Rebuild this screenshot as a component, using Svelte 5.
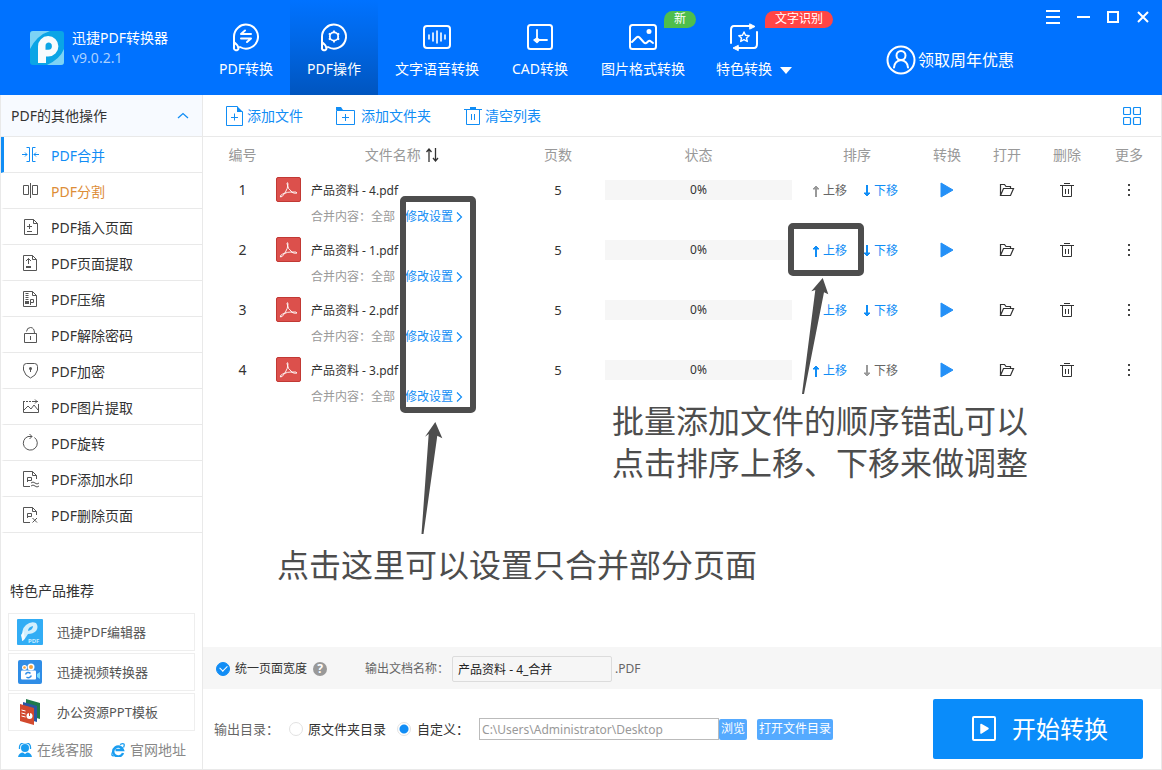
<script>
  const tabs = [
    { label: 'PDF转换', icon: 'convert' },
    { label: 'PDF操作', icon: 'operate', active: true },
    { label: '文字语音转换', icon: 'voice', wide: true },
    { label: 'CAD转换', icon: 'cad' },
    { label: '图片格式转换', icon: 'image', wide: true, badge: '新', tone: 'green' },
    { label: '特色转换', icon: 'special', menu: true, badge: '文字识别', tone: 'red' }
  ];

  const tools = [
    { label: 'PDF合并', icon: 'merge' },
    { label: 'PDF分割', icon: 'split' },
    { label: 'PDF插入页面', icon: 'insert' },
    { label: 'PDF页面提取', icon: 'extract' },
    { label: 'PDF压缩', icon: 'compress' },
    { label: 'PDF解除密码', icon: 'unlock' },
    { label: 'PDF加密', icon: 'shield' },
    { label: 'PDF图片提取', icon: 'picture' },
    { label: 'PDF旋转', icon: 'rotate' },
    { label: 'PDF添加水印', icon: 'watermark' },
    { label: 'PDF删除页面', icon: 'remove' }
  ];

  const products = [
    { label: '迅捷PDF编辑器', icon: 'editor' },
    { label: '迅捷视频转换器', icon: 'video' },
    { label: '办公资源PPT模板', icon: 'ppt' }
  ];

  const files = [
    { name: '产品资料 - 4.pdf', pages: 5, progress: 0 },
    { name: '产品资料 - 1.pdf', pages: 5, progress: 0 },
    { name: '产品资料 - 2.pdf', pages: 5, progress: 0 },
    { name: '产品资料 - 3.pdf', pages: 5, progress: 0 }
  ];

  let current = $state('merge');
  let unify = $state(true);
  let target = $state('custom');
  let outputName = $state('产品资料 - 4_合并');
  let outputPath = $state('C:\\Users\\Administrator\\Desktop');
</script>

<div class="app">
  <header>
    <div class="brand">
      <svg width="34" height="34" viewBox="0 0 34 34">
        <rect width="34" height="34" rx="3" fill="#0aa5e6" />
        <path d="M0 3Q0 0 3 0H20Q7 4 0 18Z" fill="#7dd3f5" />
        <path d="M34 18V31Q34 34 31 34H17Q30 28 34 18Z" fill="#7dd3f5" />
        <path fill-rule="evenodd" d="M8 32V15.500A10.200 10.200 0 1 1 18.200 25.500H16V32ZM18.300 11.600A3.600 3.600 0 0 0 15.500 15.300V18.800H18.300A3.600 3.600 0 0 0 18.300 11.600Z" fill="#f7fbfd" />
      </svg>
      <div class="brand-text">
        <strong>迅捷PDF转换器</strong>
        <span>v9.0.2.1</span>
      </div>
    </div>

    <nav class="tabs">
      {#each tabs as tab}
        <button class="tab" class:active={tab.active} class:wide={tab.wide} class:menu={tab.menu}>
          <span class="tab-icon">
            <svg width="30" height="30" viewBox="0 0 30 30" fill="none" stroke="#fff" stroke-width="2" stroke-linecap="round" stroke-linejoin="round">
              {#if tab.icon === 'convert' || tab.icon === 'operate'}
                <path d="M3 15A12 12 0 1 1 9 25M3 15V25.500A2.300 2.300 0 0 0 7.500 26.500Q7 23 3.500 20.500" />
                {#if tab.icon === 'convert'}
                  <path d="M20 12H10L14 8.500M10 16.500H20L16 20" />
                {:else}
                  <circle cx="15" cy="14.500" r="4.200" stroke-width="1.800" />
                  <path stroke-width="1.800" stroke-linecap="butt" d="M15 10.500V8.500M15 18.500V20.500M11.500 12.500L9.800 11.500M18.500 12.500L20.200 11.500M11.500 16.500L9.800 17.500M18.500 16.500L20.200 17.500" />
                {/if}
              {:else if tab.icon === 'voice'}
                <rect x="2" y="4" width="26" height="22" rx="3" />
                <path d="M7 13V17M11 11V19M15 9V21M19 11V19M23 13V17" stroke-width="1.600" />
              {:else if tab.icon === 'cad'}
                <rect x="3" y="3" width="24" height="24" rx="2.500" />
                <path d="M12 8V18H22" stroke-width="1.800" />
                <path d="M12 16L14.500 18L12 20.500L9 18Z" fill="#fff" stroke-width="1.500" />
              {:else if tab.icon === 'image'}
                <rect x="2" y="3" width="26" height="24" rx="2.500" />
                <path d="M4 20L8.500 15.500Q10 14 11.500 15.500L16 20.500Q17.500 22 19 20.500L20 19.500Q21.500 18 23 19.500L25 21" />
                <circle cx="21" cy="9.500" r="1.500" fill="#fff" />
              {:else}
                <path d="M2 21V8Q2 4 5 4H21M28 10V22Q28 26 25 26H9" />
                <path d="M21 2L26 4.500L21 7ZM9 23.500L4 26L9 28.500Z" fill="#fff" stroke-width="1" />
                <path stroke-width="1.400" d="M15 10L16.500 13.300L20.200 13.700L17.500 16L18.300 19.500L15 17.700L11.700 19.500L12.500 16L9.800 13.700L13.500 13.300Z" />
              {/if}
            </svg>
            {#if tab.badge}<span class="badge {tab.tone}">{tab.badge}</span>{/if}
          </span>
          <span class="tab-label">{tab.label}</span>
          {#if tab.menu}
            <svg class="caret" width="12" height="7" viewBox="0 0 12 7"><path d="M0 0H12L6 7Z" fill="#fff" /></svg>
          {/if}
        </button>
      {/each}
    </nav>

    <button class="promo">
      <svg width="30" height="30" viewBox="0 0 30 30" fill="none" stroke="#fff" stroke-width="2" stroke-linecap="round">
        <circle cx="15" cy="15" r="13.500" />
        <circle cx="15" cy="10.500" r="4.500" />
        <path d="M8 22.500Q8.500 16 15 15Q21.500 16 22 22.500" />
      </svg>
      领取周年优惠
    </button>

    <div class="window-controls">
      <button aria-label="菜单"><svg width="14" height="14" viewBox="0 0 14 14" stroke="#fff" stroke-width="2"><path d="M0 1H14M0 7H14M0 13H14" /></svg></button>
      <button aria-label="最小化"><svg width="14" height="14" viewBox="0 0 14 14" stroke="#fff" stroke-width="2"><path d="M1 7H14" /></svg></button>
      <button aria-label="最大化"><svg width="14" height="14" viewBox="0 0 14 14" fill="none" stroke="#fff" stroke-width="2"><path d="M2 2H12V12H2Z" /></svg></button>
      <button aria-label="关闭"><svg width="14" height="14" viewBox="0 0 14 14" stroke="#fff" stroke-width="2"><path d="M2 2L12 12M12 2L2 12" /></svg></button>
    </div>
  </header>

  <div class="body">
    <aside>
      <button class="group">
        PDF的其他操作
        <svg width="12" height="8" viewBox="0 0 12 8" fill="none" stroke="#118df5" stroke-width="1.300"><path d="M1 6L6 1.500L11 6" /></svg>
      </button>
      <ul class="tools">
        {#each tools as tool}
          <li>
            <button class="tool {tool.icon}" class:current={current === tool.icon} onclick={() => (current = tool.icon)}>
              <svg width="18" height="18" viewBox="0 0 18 18" fill="none" stroke="currentColor">
                {#if tool.icon === 'merge'}
                  <path d="M4.500 1.500H7.500V15.500H4.500M13.500 1.500H10.500V15.500H13.500M0 8.500H5M3 6.500L5 8.500L3 10.500M17 8.500H12M14 6.500L12 8.500L14 10.500" />
                {:else if tool.icon === 'split'}
                  <path d="M1.500 3.500H6.500V12.500H1.500ZM10.500 3.500H15.500V12.500H10.500ZM8.500 1V16" />
                {:else if tool.icon === 'insert'}
                  <path d="M11.500 1.500H2.500V16.500H15.500V5.500ZM11.500 1.500V5.500H15.500M7.500 6V11M5 8.500H10M5 13.500H10" />
                {:else if tool.icon === 'extract'}
                  <path d="M10.500 1.500H1.500V16.500H14.500V5.500ZM10.500 1.500V5.500H14.500M6.500 4.500V10M4 7L6.500 4.500L9 7" />
                  <path d="M4 13H9" stroke-width="2" />
                {:else if tool.icon === 'compress'}
                  <path d="M10.500 1.500H1.500V16.500H14.500V5.500ZM10.500 1.500V5.500H14.500M8.500 15V9.500H11.500V12.500H8.500" />
                  <path d="M5 3V10" stroke-width="3" stroke-dasharray="1 1" /><path d="M3 12.500H7" stroke-width="3" />
                {:else if tool.icon === 'unlock'}
                  <path d="M2.500 7.500H14.500V16.500H2.500ZM4.500 5.500Q5 1.500 8.500 1.500Q12.500 1.500 12.500 7.500M8.500 10V14" />
                {:else if tool.icon === 'shield'}
                  <path d="M1.500 4.500Q1.500 1.500 4.500 1.500H12.500Q15.500 1.500 15.500 4.500V8Q14 14 8.500 16Q3 14 1.500 8Z" />
                  <circle cx="8.500" cy="6.500" r="1.500" fill="currentColor" stroke="none" /><path d="M8.500 7V10" />
                {:else if tool.icon === 'picture'}
                  <path d="M1.500 3V14.500H16.500V6M2 12L6 8L9 11L12 7L16 12" />
                  <path d="M1 3.500H10" stroke-dasharray="2 1" /><path d="M10 3.500H16M13 1.500L15 3.500L13 5.500" />
                {:else if tool.icon === 'rotate'}
                  <path d="M12.500 3.500A7 7 0 1 1 6 2.500H10M7.500 0L10 2.500L7.500 5" />
                {:else}
                  <path d="M8 16.500H1.500V1.500H10.500L14.500 5.500V9M10.500 1.500V5.500H14.500M5.500 12V7.500H9.500V10.500H5.500" />
                  {#if tool.icon === 'watermark'}
                    <path d="M9 13Q11 11 13 13T17 13M9 16Q11 14 13 16T17 16" />
                  {:else}
                    <path d="M10.500 12L15 16.500M15 12L10.500 16.500" />
                  {/if}
                {/if}
              </svg>
              <span>{tool.label}</span>
            </button>
          </li>
        {/each}
      </ul>

      <section class="products">
        <h2>特色产品推荐</h2>
        {#each products as product}
          <a class="product" href="#{product.icon}">
            <svg width="26" height="26" viewBox="0 0 26 26">
              {#if product.icon === 'editor'}
                <rect width="26" height="26" rx="1" fill="#32adf5" />
                <path fill-rule="evenodd" d="M5 22Q4 10 9 6Q14 2 19 4Q22 8 19 12Q16 15 11 15L7 21ZM11 12Q11 8 16 7Q16 11 11 12Z" fill="#d3effd" />
                <path d="M4 16L5.500 22L8 19Q6 15 7 12Z" fill="#f4fbff" />
                <text x="11" y="24" font-size="6" font-weight="700" fill="#c5eaff">PDF</text>
              {:else if product.icon === 'video'}
                <rect x="1" y="1" width="24" height="24" rx="2" fill="#2f8de6" />
                <circle cx="7.500" cy="8.500" r="2.500" fill="#fff" /><circle cx="14" cy="8" r="3.500" fill="#fff" />
                <circle cx="7.500" cy="8.500" r="1.300" fill="#f5a23a" /><circle cx="14" cy="8" r="2" fill="#f5a23a" />
                <rect x="4" y="11.500" width="15" height="9" rx="1" fill="#fff" /><path d="M20 15L23 13V20L20 18Z" fill="#7ddcff" />
                <path d="M8.500 15.500A3 3 0 0 1 13.500 14.500M14.300 16.500A3 3 0 0 1 9.500 18" fill="none" stroke="#2f8de6" stroke-width="1.500" />
              {:else}
                <path d="M9 0L23 4V20L9 16Z" fill="#1f7a4c" /><path d="M6 3L20 7V23L6 19Z" fill="#2b56a3" />
                <path d="M3 5L17 9V26L3 22Z" fill="#d2492e" />
                <path d="M4.500 11L8.500 12M4.500 14L8.500 15M4.500 17L8.500 18" stroke="#fff" /><circle cx="12.500" cy="17" r="3" fill="#fff" /><path d="M12.500 17V13" stroke="#d2492e" />
              {/if}
            </svg>
            {product.label}
          </a>
        {/each}
        <div class="links">
          <a href="#service">
            <svg width="14" height="14" viewBox="0 0 14 14"><circle cx="7" cy="5" r="4" fill="#1a9df0" /><path d="M1.500 6V4A5.500 4.500 0 0 1 12.500 4V6" fill="none" stroke="#1a9df0" stroke-width="1.300" /><path d="M0 14Q1 9.500 5 9.500L7 11L9 9.500Q13 9.500 14 14Z" fill="#1a9df0" /></svg>
            在线客服
          </a>
          <a href="#site">
            <svg width="14" height="14" viewBox="0 0 14 14" fill="none" stroke="#1a9df0"><path d="M12 10A5 5 0 1 1 12 7H4.500" stroke-width="2.400" /><path d="M9 1.500Q15-1 12.500 4.500M2 8Q-1 14 4 12.500" stroke-width="1.300" /></svg>
            官网地址
          </a>
        </div>
      </section>
    </aside>

    <main>
      <div class="toolbar">
        <button>
          <svg width="18" height="20" viewBox="0 0 18 20" fill="none" stroke="#118df5"><path d="M11.500 .5H.5V19.500H16.500V5.500M8.500 7.500V14.500M5 11.500H12" /><path d="M11 0L17 6H11Z" fill="#118df5" stroke="none" /></svg>
          添加文件
        </button>
        <button>
          <svg class="folder-add" width="20" height="20" viewBox="0 0 20 20" fill="none" stroke="#118df5"><path d="M.5 4.500H18.500V18.500H.5ZM9.500 8V15M6 11.500H13" /><path d="M0 1H5L7 4H0Z" fill="#118df5" stroke="none" /></svg>
          添加文件夹
        </button>
        <button>
          <svg width="18" height="20" viewBox="0 0 18 20" fill="none" stroke="#118df5"><path d="M0 3.500H18M2.500 4V18.500H15.500V4M7.500 8V14M10.500 8V14" /><path d="M6 1H12V3H6Z" fill="#118df5" stroke="none" /></svg>
          清空列表
        </button>
        <button class="grid-view" aria-label="网格视图">
          <svg width="18" height="18" viewBox="0 0 18 18" fill="none" stroke="#118df5" stroke-width="1.200"><rect x=".5" y=".5" width="7" height="7" rx="1" /><rect x="10.500" y=".5" width="7" height="7" rx="1" /><rect x=".5" y="10.500" width="7" height="7" rx="1" /><rect x="10.500" y="10.500" width="7" height="7" rx="1" /></svg>
        </button>
      </div>

      <div class="files">
        <table>
          <colgroup>
            <col class="c-no" /><col class="c-name" /><col class="c-pages" /><col /><col class="c-order" />
            <col class="c-act" /><col class="c-act" /><col class="c-act" /><col class="c-more" />
          </colgroup>
          <thead>
            <tr>
              <th class="no">编号</th>
              <th class="name-head">
                文件名称
                <svg width="13" height="14" viewBox="0 0 13 14" fill="none" stroke="#333" stroke-width="1.300"><path d="M3 14V2M.5 4L3 1L5.500 4M9.500 0V12M7 10L9.500 13L12 10" /></svg>
              </th>
              <th>页数</th>
              <th>状态</th>
              <th class="order-head">排序</th>
              <th>转换</th>
              <th>打开</th>
              <th>删除</th>
              <th>更多</th>
            </tr>
          </thead>
          <tbody>
            {#each files as file, i}
              <tr>
                <td class="no">{i + 1}</td>
                <td class="file-cell">
                  <div class="file">
                    <svg width="25" height="25" viewBox="0 0 25 25"><rect x=".5" y=".5" width="24" height="24" rx="1.500" fill="#dc504c" stroke="#c23934" /><path d="M4.500 20Q3.500 18 9 16Q12 11 12 7Q11.500 4.500 11 6.500Q11.500 12 16 15Q21 14.500 21 16Q19 17 15 15Q11 15 8.500 16.500Q6 20.500 4.500 20Z" fill="none" stroke="#fff" stroke-width=".9" /></svg>
                    <span class="file-name">{file.name}</span>
                  </div>
                  <div class="scope">
                    <span>合并内容：全部</span>
                    <button>修改设置<svg width="7" height="10" viewBox="0 0 7 10" fill="none" stroke="#118df5" stroke-width="1.200"><path d="M1 .5L5.500 5L1 9.500" /></svg></button>
                  </div>
                </td>
                <td>{file.pages}</td>
                <td class="status"><div class="bar"><i style="width: {file.progress}%"></i><span>{file.progress}%</span></div></td>
                <td class="order">
                  <div>
                    <button disabled={i === 0}>
                      <svg width="8" height="12" viewBox="0 0 8 12" fill="none" stroke="currentColor" stroke-width="2"><path d="M4 12V3" /><path d="M1 4L4 1L7 4Z" fill="currentColor" stroke-width="1" /></svg><span>上移</span>
                    </button>
                    <button disabled={i === files.length - 1}>
                      <svg width="8" height="12" viewBox="0 0 8 12" fill="none" stroke="currentColor" stroke-width="2"><path d="M4 0V9" /><path d="M1 8L4 11L7 8Z" fill="currentColor" stroke-width="1" /></svg><span>下移</span>
                    </button>
                  </div>
                </td>
                <td><button class="act" aria-label="转换"><svg width="14" height="16" viewBox="0 0 14 16"><path d="M1 1L13 8L1 15Z" fill="#2490f7" stroke="#2490f7" stroke-linejoin="round" /></svg></button></td>
                <td><button class="act" aria-label="打开"><svg width="16" height="14" viewBox="0 0 16 14" fill="none" stroke="#333" stroke-width="1.200"><path d="M1.500 12.500V1.500H5.500L7 3.500H11.500V5.500M1.500 12.500L4.500 5.500H14.500L11.500 12.500Z" /></svg></button></td>
                <td><button class="act" aria-label="删除"><svg width="14" height="16" viewBox="0 0 14 16" fill="none" stroke="#333"><path d="M0 3.500H14M4 1.500H10M2.500 4V14.500H11.500V4M5.500 7V12M8.500 7V12" /></svg></button></td>
                <td><button class="act" aria-label="更多"><svg width="4" height="14" viewBox="0 0 4 14" fill="#444"><path d="M1 1H3V3H1ZM1 6H3V8H1ZM1 11H3V13H1Z" /></svg></button></td>
              </tr>
            {/each}
          </tbody>
        </table>
      </div>

      <div class="options">
        <label class="unify"><input type="checkbox" bind:checked={unify} />统一页面宽度</label>
        <span class="help">?</span>
        <label class="out-name">输出文档名称：<input type="text" bind:value={outputName} /></label>
        <span class="ext">.PDF</span>
      </div>

      <div class="output">
        <span class="caption">输出目录：</span>
        <label class="radio source"><input type="radio" value="source" bind:group={target} />原文件夹目录</label>
        <label class="radio custom"><input type="radio" value="custom" bind:group={target} />自定义：</label>
        <input class="path" type="text" aria-label="输出路径" bind:value={outputPath} />
        <button class="small">浏览</button>
        <button class="small open-dir">打开文件目录</button>
        <button class="start">
          <svg width="24" height="26" viewBox="0 0 24 26" fill="none" stroke="#fff" stroke-width="2"><rect x="1" y="1" width="22" height="23" rx="1" /><path d="M9 8.500L16 12.500L9 17Z" fill="#fff" stroke-width="1.500" stroke-linejoin="round" /></svg>
          开始转换
        </button>
      </div>
    </main>
  </div>

  <div class="frame settings-frame"></div>
  <svg class="arrow settings-arrow" width="24" height="116" viewBox="0 0 24 116"><path d="M15.300 1L22.300 17.300L17.300 14.700L3.500 113H1.500L8.700 13L5 15.700Z" /></svg>
  <p class="note settings-note">点击这里可以设置只合并部分页面</p>

  <div class="frame order-frame"></div>
  <svg class="arrow order-arrow" width="30" height="118" viewBox="0 0 30 118"><path d="M22.700 1L28.300 17.300L24 15.300L4 117H2L15.300 13L11.300 14.300Z" /></svg>
  <p class="note order-note">批量添加文件的顺序错乱可以<br />点击排序上移、下移来做调整</p>
</div>

<style>
  :global(body) { margin: 0; background: #fff; }
  .app, .app * { box-sizing: border-box; }
  .app {
    position: relative;
    display: flex;
    flex-direction: column;
    min-height: 100vh;
    min-width: 1100px;
    font: 14px/20px "Noto Sans", "Noto Sans CJK SC", sans-serif;
    color: #333;
  }
  button { border: 0; padding: 0; margin: 0; background: none; font: inherit; color: inherit; cursor: pointer; }
  a { color: inherit; text-decoration: none; }
  svg { display: block; flex: none; }

  header { display: flex; height: 95px; background: #0072ff; color: #fff; }
  .brand { display: flex; align-items: center; gap: 8px; width: 202px; padding-left: 30px; }
  .brand-text { display: flex; flex-direction: column; }
  .brand-text strong { font-weight: 400; }
  .brand-text span { color: #a9d0ff; }
  .tabs { display: flex; }
  .tab { position: relative; width: 88px; padding-top: 22px; display: flex; flex-direction: column; align-items: center; justify-content: flex-start; gap: 7px; }
  .tab.wide { width: 118px; }
  .tab.menu { width: 84px; margin-right: 12px; }
  .tab.active { background: linear-gradient(#0072ff, #0068e8 40%, #0055bf); }
  .tab-icon { position: relative; }
  .caret { position: absolute; left: 78px; top: 67px; }
  .badge { position: absolute; left: 36px; top: -11px; height: 17px; padding: 0 10px; border-radius: 9px 9px 9px 0; font-size: 12px; line-height: 16px; white-space: nowrap; }
  .green { background: #4fbe4c; }
  .red { background: #ff4545; }
  .promo { display: flex; align-items: center; gap: 2px; margin-left: auto; margin-right: 16px; padding-top: 24px; font-size: 16px; }
  .window-controls { display: flex; align-items: flex-start; gap: 16px; padding: 10px 12px 0 16px; }

  .body { flex: 1; display: flex; border: 1px solid #e9e9e9; border-top: 0; }
  aside { display: flex; flex-direction: column; flex: none; width: 202px; border-right: 1px solid #e9e9e9; }
  .group { display: flex; align-items: center; justify-content: space-between; height: 42px; padding: 0 13px 0 10px; background: #f7faff; border-bottom: 1px solid #e9e9e9; }
  .tools { list-style: none; margin: 0; padding: 0; }
  .tool { display: flex; align-items: center; gap: 11px; width: 100%; height: 36px; padding-left: 18px; border-left: 3px solid transparent; border-bottom: 1px solid #e9e9e9; border-image: none; background-clip: padding-box; }
  .tool svg { color: #555; }
  .tool span { padding-top: 2px; }
  .tool.split { color: #dd8d37; }
  .tool.current, .tool.current svg { color: #118df5; }
  .tool.current { border-left-color: #118df5; }
  .products { display: flex; flex-direction: column; gap: 2px; margin-top: auto; padding: 0 7px 9px; }
  .products h2 { margin: 0 0 10px 2px; font-size: 14px; line-height: 20px; font-weight: 400; }
  .product { display: flex; align-items: center; gap: 14px; height: 38px; padding-left: 8px; border: 1px solid #eee; font-size: 13px; color: #555; }
  .links { display: flex; gap: 18px; padding: 7px 0 0 10px; color: #888; }
  .links a { display: flex; align-items: center; gap: 5px; }

  main { flex: 1; display: flex; flex-direction: column; min-width: 0; }
  .toolbar { display: flex; align-items: center; gap: 33px; height: 42px; padding: 1px 20px 0 23px; border-bottom: 1px solid #e9e9e9; color: #118df5; }
  .toolbar button { display: flex; align-items: center; gap: 3px; }
  .toolbar .folder-add { margin-right: 2px; }
  .toolbar .grid-view { margin-left: auto; }

  .files { flex: 1; }
  table { width: 100%; table-layout: fixed; border-collapse: collapse; }
  .c-no { width: 67px; }
  .c-name { width: 254px; }
  .c-pages { width: 68px; }
  .c-order { width: 112px; }
  .c-act { width: 60px; }
  .c-more { width: 64px; }
  th { height: 36px; padding: 0; font-weight: 400; color: #999; text-align: center; }
  td { height: 60px; padding: 4px 0; vertical-align: top; text-align: center; font-size: 13px; line-height: 26px; }
  .no { padding-left: 12px; }
  td.no { font-size: 14px; }
  .name-head { padding-left: 10px; }
  .name-head svg { display: inline-block; margin-left: 2px; vertical-align: -2px; }
  .order-head { padding-right: 8px; }
  .file-cell { padding-left: 6px; font-size: 12px; }
  .file { display: flex; gap: 10px; height: 26px; line-height: 28px; }
  .scope { display: flex; gap: 10px; padding-left: 35px; line-height: 28px; color: #999; height: 26px; }
  .scope button { display: flex; align-items: center; gap: 3px; height: 28px; color: #118df5; }
  .status { padding-left: 13px; padding-right: 13px; }
  .bar { position: relative; height: 20px; margin-top: 3px; background: #f6f6f6; font-size: 12px; line-height: 20px; }
  .bar i { position: absolute; left: 0; top: 0; bottom: 0; background: #118df5; }
  .bar span { position: relative; }
  .order { padding-left: 7px; font-size: 12px; line-height: 28px; }
  .order div { display: flex; gap: 16px; height: 28px; }
  .order button { display: flex; align-items: center; gap: 3px; color: #118df5; }
  .order button:disabled { color: #999; cursor: default; }
  .order button:disabled span { color: #666; }
  .act { display: flex; align-items: center; justify-content: center; width: 100%; height: 26px; }

  .options { display: flex; align-items: center; height: 42px; padding: 1px 0 0 13px; background: #f6f6f6; font-size: 12px; }
  .unify { display: flex; align-items: center; gap: 5px; }
  .unify input { appearance: none; position: relative; width: 14px; height: 14px; margin: 0; border-radius: 7px; border: 1px solid #bbb; }
  .unify input:checked { background: #118df5; border-color: #118df5; }
  .unify input:checked::after { content: ""; position: absolute; left: 3px; top: 2px; width: 6px; height: 4px; border-left: 1px solid #fff; border-bottom: 1px solid #fff; transform: rotate(-45deg); }
  .help { width: 14px; height: 14px; margin-left: 6px; border-radius: 7px; background: #999; color: #fff; text-align: center; line-height: 14px; font-weight: 700; }
  .out-name { display: flex; align-items: center; gap: 3px; margin-left: 38px; color: #666; }
  .out-name input { width: 160px; height: 26px; padding: 0 5px; border: 1px solid #dcdcdc; border-radius: 2px; background: #f6f6f6; font: inherit; color: #222; }
  .ext { margin-left: 3px; color: #666; }

  .output { display: flex; align-items: center; height: 80px; padding: 0 18px 0 11px; font-size: 13px; }
  .caption { color: #666; }
  .radio { display: flex; align-items: center; gap: 5px; }
  .radio input { appearance: none; width: 14px; height: 14px; margin: 0; border: 1px solid #e2e2e2; border-radius: 7px; }
  .radio input:checked { background: radial-gradient(circle, #118df5 4px, #fff 5px); }
  .source { margin-left: 10px; }
  .custom { margin-left: 11px; gap: 6px; }
  .path { width: 240px; height: 22px; margin-left: 10px; padding: 0 2px; border: 1px solid #bbb; font: inherit; font-size: 12px; color: #999; }
  .small { height: 21px; padding: 0 2px; border-radius: 2px; background: #55aaff; color: #fff; font-size: 12px; line-height: 20px; white-space: nowrap; }
  .open-dir { margin-left: 10px; }
  .start { display: flex; align-items: center; justify-content: center; gap: 16px; width: 210px; height: 60px; margin-left: auto; padding-left: 4px; border-radius: 2px; background: #0a8cfa; color: #fff; font-size: 24px; }

  .frame { position: absolute; border: 6px solid #4d4d4d; border-radius: 5px; pointer-events: none; }
  .arrow { position: absolute; fill: #4d4d4d; pointer-events: none; }
  .note { position: absolute; margin: 0; font-size: 32px; line-height: 42px; color: #4d4d4d; white-space: nowrap; }
  .settings-frame { left: 400px; top: 196px; width: 76px; height: 217px; }
  .settings-arrow { left: 420px; top: 421px; }
  .settings-note { left: 277px; top: 544px; }
  .order-frame { right: 298px; top: 223px; width: 76px; height: 53px; }
  .order-arrow { right: 332px; top: 277px; }
  .order-note { right: 134px; top: 400px; }
</style>
